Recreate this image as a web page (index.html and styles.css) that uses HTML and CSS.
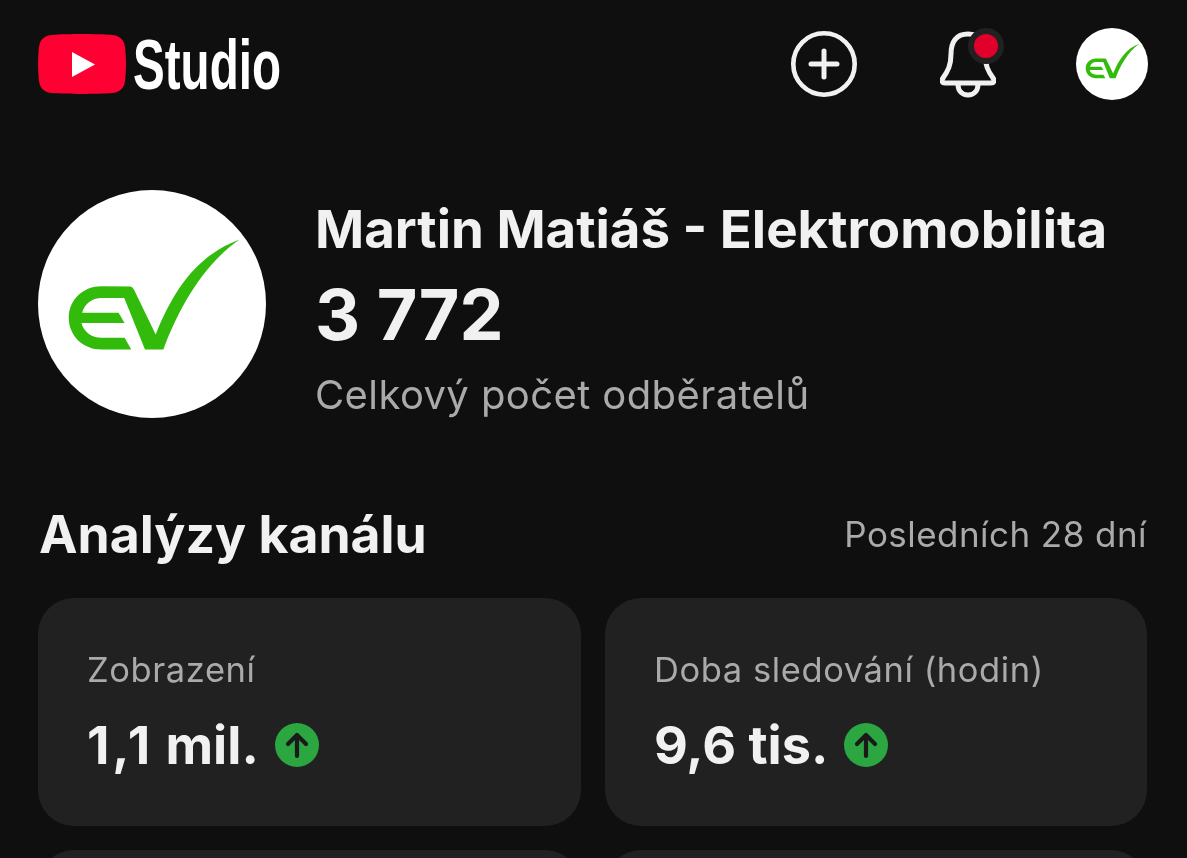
FILE: index.html
```html
<!DOCTYPE html>
<html lang="cs">
<head>
<meta charset="utf-8">
<title>YouTube Studio</title>
<link rel="stylesheet" href="styles.css">
</head>
<body>
<svg class="defs" width="0" height="0" aria-hidden="true">
  <symbol id="ev" viewBox="25 30 682 682">
    <circle cx="366" cy="371" r="341" fill="#fff"/>
    <path fill="#33bb0c" d="M300 319 L215 318 C160 318 117 358 117 412 C117 466 160 507 215 507 L304 507 L284 472 L215 472 C185 472 162 455 155 428 L284 428 L266 397 L157 397 C165 370 187 353 215 353 L283 353 L345 507 L400 507 C440 400 510 260 628 178 C500 225 430 330 377 462 L312 328 C308 322 305 319 300 319 Z"/>
  </symbol>
</svg>
<main class="page">
  <header class="topbar">
    <div class="brand">
      <svg class="yt" viewBox="0 0 88 60">
        <path fill="#ff0033" d="M14 1 C30 -0.2 58 -0.2 74 1 C81 1.5 86 5 87 13 C88.300 24 88.300 36 87 47 C86 55 81 58.500 74 59 C58 60.200 30 60.200 14 59 C7 58.500 2 55 1 47 C-0.300 36 -0.300 24 1 13 C2 5 7 1.500 14 1 Z"/>
        <path fill="#fff" d="M34 18 L57 30.500 L34 43 Z"/>
      </svg>
      <span class="studio">Studio</span>
    </div>
    <div class="actions">
      <svg class="plus" viewBox="0 0 68 68" fill="none" stroke="#f1f1f1" stroke-linecap="round">
        <circle cx="34" cy="34" r="30.700" stroke-width="4.600"/>
        <path stroke-width="5" d="M21 34 H47 M34 21 V47"/>
      </svg>
      <div class="bell-wrap">
        <svg class="bell" viewBox="0 0 56 68" fill="none" stroke="#f1f1f1" stroke-width="5" stroke-linecap="round" stroke-linejoin="round">
          <path d="M28 4 C16 4 11 12 11 24 C11 35 8 41 3 48 C1 51 2 53 5 53 H51 C54 53 55 51 53 48 C48 41 45 35 45 24 C45 12 40 4 28 4 Z"/>
          <path d="M18 54 C18 61 22 65 28 65 C34 65 38 61 38 54"/>
        </svg>
        <span class="badge"></span>
      </div>
      <svg class="avatar-small"><use href="#ev"/></svg>
    </div>
  </header>

  <section class="profile">
    <svg class="avatar-large"><use href="#ev"/></svg>
    <div class="profile-text">
      <h1 class="name">Martin Matiáš - Elektromobilita</h1>
      <div class="count">3 772</div>
      <div class="count-label">Celkový počet odběratelů</div>
    </div>
  </section>

  <section class="analytics-head">
    <h2 class="section-title">Analýzy kanálu</h2>
    <span class="period">Posledních 28 dní</span>
  </section>

  <section class="cards">
    <article class="card">
      <div class="card-label">Zobrazení</div>
      <div class="card-value">
        <span><span class="loose">1,1</span> mil.</span>
        <svg class="up" viewBox="0 0 44 44"><circle cx="22" cy="22" r="22" fill="#2ba640"/><path d="M22 33 V12 M13 21 L22 12 L31 21" fill="none" stroke="#1a1a1a" stroke-width="4.200" stroke-linecap="round" stroke-linejoin="round"/></svg>
      </div>
    </article>
    <article class="card">
      <div class="card-label">Doba sledování (hodin)</div>
      <div class="card-value">
        <span>9,6 tis.</span>
        <svg class="up" viewBox="0 0 44 44"><circle cx="22" cy="22" r="22" fill="#2ba640"/><path d="M22 33 V12 M13 21 L22 12 L31 21" fill="none" stroke="#1a1a1a" stroke-width="4.200" stroke-linecap="round" stroke-linejoin="round"/></svg>
      </div>
    </article>
    <article class="card"></article>
    <article class="card"></article>
  </section>
</main>
</body>
</html>
```
FILE: styles.css
```css
* { box-sizing: border-box; }
html, body { margin: 0; height: 100%; overflow: hidden; }
body {
  background: #0f0f0f;
  color: #f1f1f1;
  font-family: Inter, "Noto Sans", sans-serif;
}
.defs { display: block; }
.page { padding: 28px 39px 0 38px; }
.topbar { display: flex; justify-content: space-between; align-items: center; height: 72px; }
.brand { display: flex; align-items: center; gap: 7px; }
.yt { width: 88px; height: 60px; display: block; }
.studio {
  display: block;
  width: 147px;
  padding-top: 2px;
  font-family: "Liberation Sans", sans-serif;
  font-size: 71px;
  font-weight: 700;
  color: #fff;
  line-height: 60px;
  transform: scaleX(0.67);
  transform-origin: left center;
  white-space: nowrap;
}
.actions { display: flex; align-items: center; }
.plus { width: 68px; height: 68px; display: block; margin-right: 82px; }
.bell-wrap { position: relative; width: 56px; height: 68px; margin-right: 80px; }
.bell { width: 56px; height: 68px; display: block; }
.badge {
  position: absolute; left: 28px; top: -2px;
  width: 36px; height: 36px; border-radius: 50%;
  background: #e0002b; border: 6px solid #212122;
}
.avatar-small { width: 72px; height: 72px; display: block; }
.profile { display: flex; align-items: flex-start; gap: 49px; margin-top: 90px; }
.avatar-large { width: 228px; height: 228px; display: block; flex: none; }
.profile-text { padding-top: 9px; will-change: transform; }
.name { margin: 0; font-size: 52.8px; line-height: 60px; font-weight: 700; white-space: nowrap; }
.count { font-size: 70px; line-height: 80px; font-weight: 700; margin-top: 16px; }
.count-label { font-size: 40px; line-height: 46px; color: #aaa; margin-top: 17px; letter-spacing: 0.4px; }
.analytics-head { display: flex; justify-content: space-between; align-items: center; margin-top: 86px; height: 60px; will-change: transform; }
.section-title { margin: 0 0 0 1px; font-size: 51.7px; font-weight: 700; }
.period { font-size: 35px; color: #aaa; margin-right: 1px; letter-spacing: 0.45px; }
.cards { display: grid; grid-template-columns: 543px 542px; column-gap: 24px; row-gap: 24px; margin-top: 34px; }
.card { background: #212121; border-radius: 36px; height: 228px; padding: 50px 49px; }
.card-label { font-size: 34.5px; line-height: 44px; color: #aaa; letter-spacing: 0.58px; will-change: transform; }
.card-value { display: flex; align-items: center; gap: 16px; font-size: 52.2px; line-height: 60px; font-weight: 700; margin-top: 23px; will-change: transform; }
.loose { letter-spacing: 2.8px; }
.up { width: 44px; height: 44px; display: block; }
```
